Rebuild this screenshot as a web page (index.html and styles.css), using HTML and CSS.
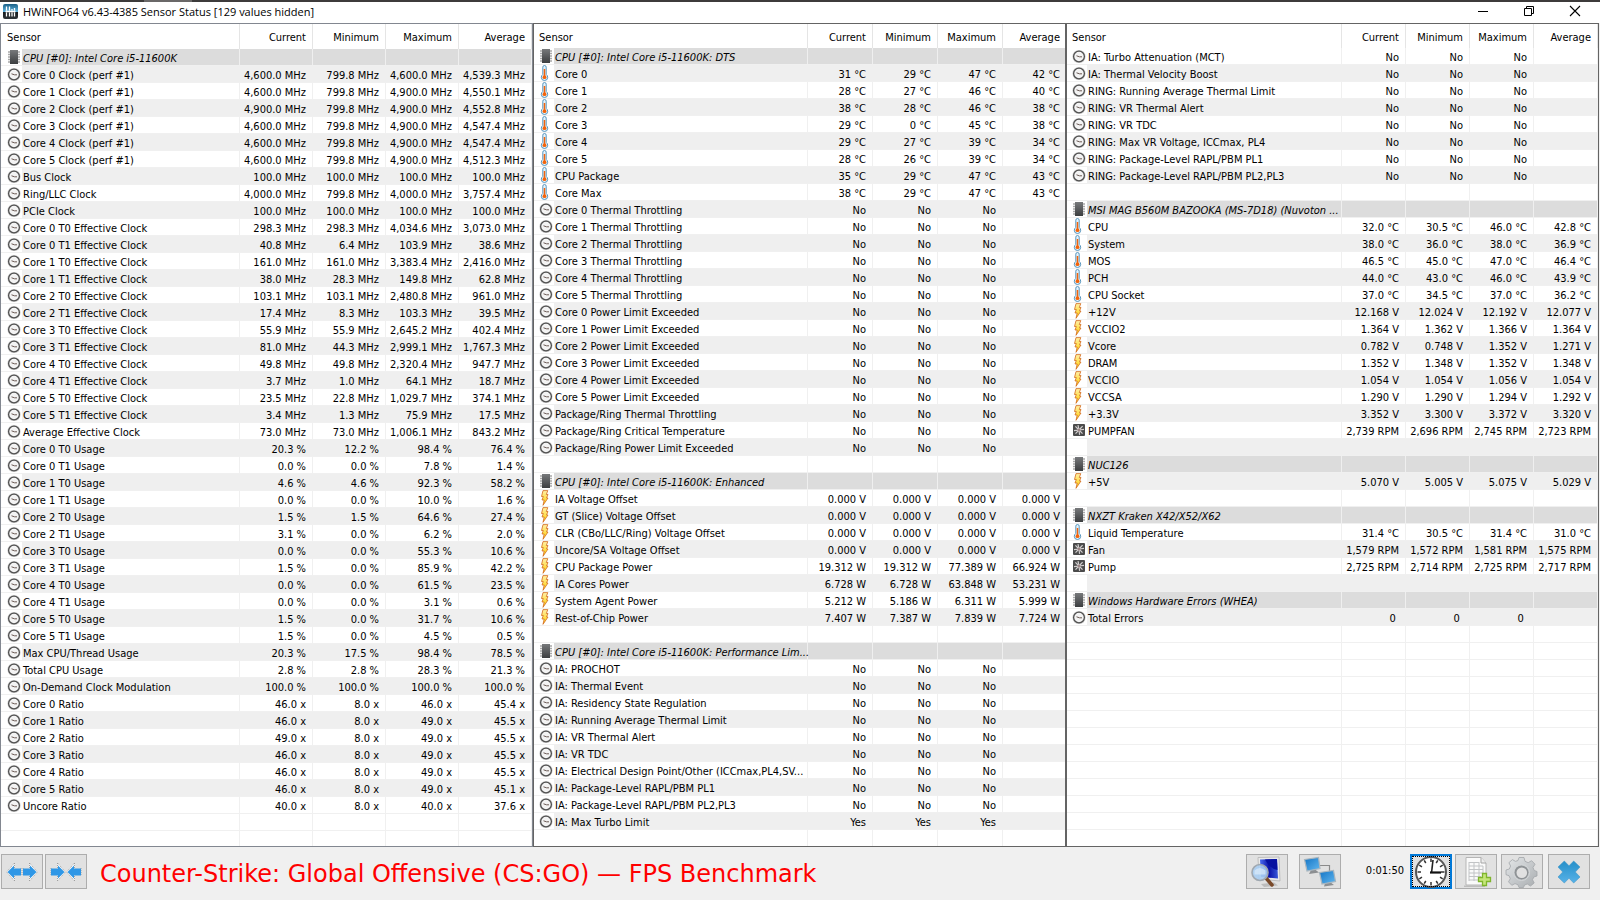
FILE: index.html
```html
<!DOCTYPE html>
<html lang="en">
<head>
<meta charset="utf-8">
<title>HWiNFO64 v6.43-4385 Sensor Status</title>
<link rel="stylesheet" href="styles.css">
</head>
<body>
<svg class="defs" aria-hidden="true">
  <defs>
    <linearGradient id="g-chip" x1="0" y1="0" x2="0" y2="1"><stop offset="0" stop-color="#77797b"/><stop offset="1" stop-color="#3c3e40"/></linearGradient>
    <linearGradient id="g-bolt" x1="0" y1="0" x2="0" y2="1"><stop offset="0" stop-color="#fff0a8"/><stop offset="1" stop-color="#ffd000"/></linearGradient>
    <linearGradient id="g-screen" x1="0" y1="0" x2="1" y2="1"><stop offset="0" stop-color="#1273c4"/><stop offset="1" stop-color="#63b8f0"/></linearGradient>
    <linearGradient id="g-navy" x1="0" y1="0" x2="1" y2="0"><stop offset="0" stop-color="#4a6cf0"/><stop offset=".5" stop-color="#0a12a8"/><stop offset="1" stop-color="#3858d8"/></linearGradient>
    <linearGradient id="g-cross" x1="0" y1="0" x2="0" y2="1"><stop offset="0" stop-color="#258fc9"/><stop offset="1" stop-color="#58b2e8"/></linearGradient>
    <linearGradient id="g-gear" x1="0" y1="0" x2="1" y2="1"><stop offset="0" stop-color="#e4e7e9"/><stop offset="1" stop-color="#a9adb0"/></linearGradient>
    <linearGradient id="g-app" x1="0" y1="0" x2="0" y2="1"><stop offset="0" stop-color="#1a5f86"/><stop offset=".5" stop-color="#5fb2dc"/><stop offset=".52" stop-color="#14181b"/><stop offset="1" stop-color="#30363a"/></linearGradient>
  </defs>
  <symbol id="i-clock" viewBox="0 0 14 16">
    <circle cx="7" cy="8.500" r="6.600" fill="#cfcfcf"/>
    <circle cx="7" cy="8.500" r="5.400" fill="#f3f3f3" stroke="#505050" stroke-width="1.300"/>
    <path d="M4.500 7.800 7.500 8.800 10 8.800" fill="none" stroke="#6b5a55" stroke-width="1"/>
  </symbol>
  <symbol id="i-chip" viewBox="0 0 14 16">
    <path d="M1 3h12M1 5.500h12M1 8h12M1 10.500h12M1 13h12" stroke="#a8a8a8" stroke-width="1.300"/>
    <rect x="3" y="1" width="8" height="14" fill="url(#g-chip)"/>
  </symbol>
  <symbol id="i-temp" viewBox="0 0 14 16">
    <path d="M3.800 9.500V2.200Q3.800.5 5.500.5T7.200 2.200V9.500Q8.700 10.500 8.700 12.300A3.200 3.200 0 0 1 2.300 12.300Q2.300 10.500 3.800 9.500Z" fill="#e4f3fc" stroke="#5795bd" stroke-width="1"/>
    <path d="M5.500 4V12" stroke="#f2640c" stroke-width="1.500"/>
    <circle cx="5.500" cy="12.200" r="1.900" fill="#f2640c"/>
  </symbol>
  <symbol id="i-bolt" viewBox="0 0 14 16">
    <path d="M4 .6H8.800L7.300 4.500H9L7.500 8H9L4 15.300 5.200 10H3L4.300 6.500H2.500Z" fill="url(#g-bolt)" stroke="#d2691e" stroke-width=".8"/>
  </symbol>
  <symbol id="i-fan" viewBox="0 0 14 16">
    <rect x="1" y="2" width="12" height="12" rx="1" fill="#4b4b4b"/>
    <path d="M7 8 6 3.200M7 8 10.600 4.200M7 8 12 7.400M7 8 10.500 11.600M7 8 7.600 12.900M7 8 3.500 11.700M7 8 2 8.600M7 8 3.400 4.300" stroke="#d2cfcf" stroke-width="1.200"/>
    <circle cx="7" cy="8" r="1.500" fill="#9c8585"/>
  </symbol>
  <symbol id="i-right" viewBox="0 0 15 20"><path d="M7 1 14.800 10 7 19M.5 6V14M7 1V6M7 14V19" fill="#fff" stroke="#8f8f8f" stroke-width=".8" stroke-dasharray="1 1"/><path d="M.5 6.500H7.500V3.500L14 10 7.500 16.500V13.500H.5Z" fill="#2f97e6"/></symbol>
  <symbol id="i-left" viewBox="0 0 15 20"><path d="M8 1 .2 10 8 19M14.500 6V14M8 1V6M8 14V19" fill="#fff" stroke="#8f8f8f" stroke-width=".8" stroke-dasharray="1 1"/><path d="M14.500 6.500H7.500V3.500L1 10 7.500 16.500V13.500H14.500Z" fill="#2f97e6"/></symbol>
</svg>

<div class="window">
  <div class="backdrop"></div>
  <header class="titlebar">
    <svg class="app-icon" viewBox="0 0 15 15"><rect width="15" height="15" rx="2" fill="url(#g-app)"/><path d="M3.500 2.500V6.500M6.500 2.500V6.500M9 5V6.500M11.500 4V6.500M3.500 8.500V12.500M6.500 8.500V12.500M9 8.500V12.500M11.500 8.500V12.500M2.500 7.500H12.500" stroke="#fff" stroke-width="1.300"/></svg>
    <h1 class="title">HWiNFO64 v6.43-4385 Sensor Status [129 values hidden]</h1>
    <button class="caption" aria-label="Minimize"><svg viewBox="0 0 12 12"><path d="M1 6.500H11" stroke="#000"/></svg></button>
    <button class="caption" aria-label="Restore"><svg viewBox="0 0 12 12"><path d="M1.500 3.500H8.500V10.500H1.500ZM3.500 3.500V1.500H10.500V8.500H8.500" fill="none" stroke="#000"/></svg></button>
    <button class="caption" aria-label="Close window"><svg viewBox="0 0 12 12"><path d="M1 1 11 11M11 1 1 11" stroke="#000" stroke-width="1.100"/></svg></button>
  </header>

  <main class="panels">
    <section class="panel clocks"></section>
    <section class="panel thermals"></section>
    <section class="panel board"></section>
  </main>

  <footer class="toolbar">
    <button class="tool" aria-label="Expand columns"><svg class="arrow"><use href="#i-left"/></svg><svg class="arrow"><use href="#i-right"/></svg></button>
    <button class="tool" aria-label="Shrink columns"><svg class="arrow"><use href="#i-right"/></svg><svg class="arrow"><use href="#i-left"/></svg></button>
    <p class="caption-text">Counter-Strike: Global Offensive (CS:GO) — FPS Benchmark</p>
    <div class="remote">
      <button class="tool" aria-label="System summary"><svg class="glyph" viewBox="0 0 34 32">
        <path d="M11 28 24 26.500 28 29.500 14 31Z" fill="#bcbcbc"/>
        <path d="M8 1.500 29 1 30 25 9 23Z" fill="#e9e9e9" stroke="#b4b4b4" stroke-width=".8"/>
        <path d="M10 3.500 27 3 28 22.500 11 21Z" fill="url(#g-navy)"/><path d="M15 3.400 27 3 27.500 14Q20 13 15 3.400Z" fill="#0610a0"/>
        <path d="M16 22 22 29" stroke="#7a4a2a" stroke-width="3.500" stroke-linecap="round"/>
        <circle cx="10" cy="16.500" r="8" fill="#a9cdf2" fill-opacity=".9" stroke="#a0a8b0" stroke-width="1.600"/><path d="M4.500 14.500Q9.500 9.500 15.500 14.500V18.500H4.500Z" fill="#dcebfa" opacity=".7"/></svg></button>
      <button class="tool" aria-label="Network"><svg class="glyph" viewBox="0 0 34 32">
        <path d="M16 9.500H26.500V16" fill="none" stroke="#8a8a8a" stroke-width="1.200"/>
        <path d="M8 14 12 13.500 16 16.500 6 18ZM22 27 27 26 31 29 21 30.500Z" fill="#8c8f92"/>
        <path d="M1.500 3.500 15.500 1.500 17 12.500 4 15Z" fill="url(#g-screen)" stroke="#a9b6bf" stroke-width="1.200"/>
        <path d="M16.500 16.500 30.500 14.500 32.500 25.500 19 28Z" fill="url(#g-screen)" stroke="#a9b6bf" stroke-width="1.200"/></svg></button>
    </div>
    <time class="elapsed">0:01:50</time>
    <button class="tool timer" aria-label="Reset timer"><svg class="glyph" viewBox="0 0 34 32">
      <circle cx="17" cy="16" r="15" fill="#fff" stroke="#555" stroke-width="2"/>
      <g stroke="#333" stroke-width="1.500"><path d="M17 2.500V6M17 26V29.500M3.500 16H7M27 16H30.500"/><path d="M10.200 4.300 11.800 7M22.200 25 23.800 27.700M5.300 22.800 8 21.200M26 10.800 28.700 9.200M5.300 9.200 8 10.800M26 21.200 28.700 22.800M10.200 27.700 11.800 25M22.200 7 23.800 4.300"/></g>
      <path d="M17.500 17 19 4" stroke="#222" stroke-width="1.600"/><path d="M16 16.500H27" stroke="#111" stroke-width="2.200"/></svg></button>
    <button class="tool log" aria-label="Start logging"><svg class="glyph" viewBox="0 0 34 32">
      <path d="M5 29.500H26V31H5Z" fill="#bdbdbd"/>
      <path d="M7 1.500H22L27 7V29H7Z" fill="#fafafa" stroke="#b5b5b5"/><path d="M22 1.500V7H27" fill="#eee" stroke="#a5a5a5"/>
      <path d="M10 6.500H20M10 10H24M10 13.500H24M10 17H24M10 20.500H22M10 24H19M10 6V25M15 6V25M20 6V21M24 10V17" fill="none" stroke="#c2c4c6" stroke-width="1"/>
      <path d="M23.500 17.500H27.500V21.500H31.500V25.500H27.500V29.500H23.500V25.500H19.500V21.500H23.500Z" fill="#c5e67a" stroke="#7fb52c" stroke-width="1.300"/></svg></button>
    <button class="tool settings" aria-label="Settings"><svg class="glyph" viewBox="0 0 34 32">
      <path d="M14 1.500H19L20 5.300 23.200 6.700 26.600 4.700 30 8.200 28 11.500 29.200 14.500 32 15.500V20L28.800 21 27.500 23.700 29.200 27 25.500 30 22.300 28 19.500 29 18.500 31.500H14L13 28.800 10 27.600 6.800 29.300 3.500 25.800 5.300 22.700 4 19.700 1 18.700V14L4.300 13 5.600 10 3.900 6.700 7.400 3.600 10.500 5.400 13 4.500Z" fill="url(#g-gear)" stroke="#a2a6a9" stroke-width=".8"/>
      <circle cx="16.500" cy="16.500" r="7" fill="#8f9396" /><circle cx="16.500" cy="16.500" r="8" fill="none" stroke="#d3d6d8"/><circle cx="16.800" cy="16.800" r="5.300" fill="#e1e1e1"/></svg></button>
    <button class="tool close" aria-label="Close"><svg class="glyph" viewBox="0 0 34 32">
      <path d="M12.300 5 17 9.800 21.700 5 28 11 23.300 16 28 21 21.700 27 17 22.200 12.300 27 6 21 10.700 16 6 11Z" fill="url(#g-cross)" stroke="#4699c8" stroke-width=".6"/></svg></button>
  </footer>
</div>
<script src="sensors.js"></script>
</body>
</html>
```

FILE: styles.css
```css
* { box-sizing: border-box; }
body {
  margin: 0;
  background: #f0f0f0;
  color: #000;
  font: 11px/13px "DejaVu Sans Condensed", "DejaVu Sans", sans-serif;
}
button { font: inherit; padding: 0; margin: 0; }
.defs { position: absolute; width: 0; height: 0; }

.window { display: flex; flex-direction: column; height: 100vh; }
.backdrop {
  flex: none;
  height: 2px;
  background: linear-gradient(to right, #3d3b3b 9%, #6a6868 9%, #6a6868 12%, #3d3b3b 12%);
}

.titlebar {
  flex: none;
  display: flex;
  align-items: stretch;
  height: 21px;
  padding: 0 2px 0 3px;
  background: #fff;
}
.app-icon { width: 15px; height: 15px; margin-top: 2px; }
.title {
  flex: 1;
  margin: 0 0 0 5px;
  font: 11px/20px "Open Sans", sans-serif;
}
.caption { width: 46px; border: 0; background: none; }
.caption svg { display: block; width: 12px; height: 12px; margin: 0 auto 4px; }

.panels {
  flex: 1;
  min-height: 0;
  display: grid;
  grid-template-columns: repeat(3, minmax(0, 1fr));
  padding-right: 1px;
}
.panel { overflow: hidden; background: #fff; border: 1px solid #646464; }
.clocks { border-color: #828790; --value: 73px; --last: 73px; --head: 25px; --mark: 21px; --inset: 6px; }
.thermals { --value: 65px; --last: 62px; --head: 24px; --mark: 20px; --inset: 5px; }
.board { --value: 64px; --last: 64px; --head: 24px; --mark: 20px; --inset: 5px; }

.sensors { width: 100%; table-layout: fixed; border-collapse: separate; border-spacing: 0; }
.col-value { width: var(--value); }
.col-last { width: var(--last); }
.sensors th {
  height: var(--head);
  padding: 2px 6px 0;
  font-weight: normal;
  text-align: right;
  border-right: 1px solid #e5e5e5;
}
.sensors th:first-child { padding-left: var(--inset); text-align: left; }
.sensors td {
  height: 17px;
  padding: 3px 6px 0 0;
  text-align: right;
  white-space: pre;
  border-right: 1px solid #f0f0f0;
  border-bottom: 1px solid #f0f0f0;
}
.thermals td:last-child, .thermals th:last-child { border-right: 0; padding-right: 5px; }
.sensors td.name { padding: 0; text-align: left; }
.stripe td { background: #efefef; border-right-color: #efefef; }
.group td { background: #dcdcdc; border-right-color: #efefef; }
.label { display: flex; height: 16px; }
.mark { flex: none; width: var(--mark); padding-left: var(--inset); background: #fff; }
.mark svg { display: block; width: 14px; height: 16px; }
.text { flex: 1; min-width: 0; padding: 3px 0 0 1px; white-space: nowrap; }
.group .text { font-style: italic; }

.toolbar {
  flex: none;
  display: flex;
  align-items: flex-start;
  padding: 7px 10px 8px 1px;
}
.tool {
  flex: none;
  display: flex;
  align-items: center;
  justify-content: center;
  width: 42px;
  height: 35px;
  background: #e1e1e1;
  border: 1px solid #adadad;
}
.tool + .tool { margin-left: 2px; }
.arrow { width: 16px; height: 20px; }
.glyph { width: 34px; height: 32px; }
.caption-text {
  flex: 1;
  margin: 0 0 0 13px;
  padding-top: 3px;
  color: #f00;
  font: 24px/35px "DejaVu Sans", sans-serif;
  white-space: nowrap;
}
.remote { display: flex; gap: 9px; }
.elapsed { width: 63px; padding: 10px 0 0; text-align: right; }
.timer { margin-left: 6px; border: 2px solid #0078d7; outline: 1px dotted #000; outline-offset: -3px; }
.tool.log { margin-left: 3px; }
.tool.settings { margin-left: 4px; }
.tool.close { margin-left: 5px; }
```

FILE: sensors.js
```javascript
// Each line: icon|name|current|minimum|maximum|average|unit. An empty line is a spacer row.
const clocks = `chip|CPU [#0]: Intel Core i5-11600K
clock|Core 0 Clock (perf #1)|4,600.0|799.8|4,600.0|4,539.3| MHz
clock|Core 1 Clock (perf #1)|4,600.0|799.8|4,900.0|4,550.1| MHz
clock|Core 2 Clock (perf #1)|4,900.0|799.8|4,900.0|4,552.8| MHz
clock|Core 3 Clock (perf #1)|4,600.0|799.8|4,900.0|4,547.4| MHz
clock|Core 4 Clock (perf #1)|4,600.0|799.8|4,900.0|4,547.4| MHz
clock|Core 5 Clock (perf #1)|4,600.0|799.8|4,900.0|4,512.3| MHz
clock|Bus Clock|100.0|100.0|100.0|100.0| MHz
clock|Ring/LLC Clock|4,000.0|799.8|4,000.0|3,757.4| MHz
clock|PCIe Clock|100.0|100.0|100.0|100.0| MHz
clock|Core 0 T0 Effective Clock|298.3|298.3|4,034.6|3,073.0| MHz
clock|Core 0 T1 Effective Clock|40.8|6.4|103.9|38.6| MHz
clock|Core 1 T0 Effective Clock|161.0|161.0|3,383.4|2,416.0| MHz
clock|Core 1 T1 Effective Clock|38.0|28.3|149.8|62.8| MHz
clock|Core 2 T0 Effective Clock|103.1|103.1|2,480.8|961.0| MHz
clock|Core 2 T1 Effective Clock|17.4|8.3|103.3|39.5| MHz
clock|Core 3 T0 Effective Clock|55.9|55.9|2,645.2|402.4| MHz
clock|Core 3 T1 Effective Clock|81.0|44.3|2,999.1|1,767.3| MHz
clock|Core 4 T0 Effective Clock|49.8|49.8|2,320.4|947.7| MHz
clock|Core 4 T1 Effective Clock|3.7|1.0|64.1|18.7| MHz
clock|Core 5 T0 Effective Clock|23.5|22.8|1,029.7|374.1| MHz
clock|Core 5 T1 Effective Clock|3.4|1.3|75.9|17.5| MHz
clock|Average Effective Clock|73.0|73.0|1,006.1|843.2| MHz
clock|Core 0 T0 Usage|20.3|12.2|98.4|76.4| %
clock|Core 0 T1 Usage|0.0|0.0|7.8|1.4| %
clock|Core 1 T0 Usage|4.6|4.6|92.3|58.2| %
clock|Core 1 T1 Usage|0.0|0.0|10.0|1.6| %
clock|Core 2 T0 Usage|1.5|1.5|64.6|27.4| %
clock|Core 2 T1 Usage|3.1|0.0|6.2|2.0| %
clock|Core 3 T0 Usage|0.0|0.0|55.3|10.6| %
clock|Core 3 T1 Usage|1.5|0.0|85.9|42.2| %
clock|Core 4 T0 Usage|0.0|0.0|61.5|23.5| %
clock|Core 4 T1 Usage|0.0|0.0|3.1|0.6| %
clock|Core 5 T0 Usage|1.5|0.0|31.7|10.6| %
clock|Core 5 T1 Usage|1.5|0.0|4.5|0.5| %
clock|Max CPU/Thread Usage|20.3|17.5|98.4|78.5| %
clock|Total CPU Usage|2.8|2.8|28.3|21.3| %
clock|On-Demand Clock Modulation|100.0|100.0|100.0|100.0| %
clock|Core 0 Ratio|46.0|8.0|46.0|45.4| x
clock|Core 1 Ratio|46.0|8.0|49.0|45.5| x
clock|Core 2 Ratio|49.0|8.0|49.0|45.5| x
clock|Core 3 Ratio|46.0|8.0|49.0|45.5| x
clock|Core 4 Ratio|46.0|8.0|49.0|45.5| x
clock|Core 5 Ratio|46.0|8.0|49.0|45.1| x
clock|Uncore Ratio|40.0|8.0|40.0|37.6| x`;

const thermals = `chip|CPU [#0]: Intel Core i5-11600K: DTS
temp|Core 0|31|29|47|42| °C
temp|Core 1|28|27|46|40| °C
temp|Core 2|38|28|46|38| °C
temp|Core 3|29|0|45|38| °C
temp|Core 4|29|27|39|34| °C
temp|Core 5|28|26|39|34| °C
temp|CPU Package|35|29|47|43| °C
temp|Core Max|38|29|47|43| °C
clock|Core 0 Thermal Throttling|No|No|No
clock|Core 1 Thermal Throttling|No|No|No
clock|Core 2 Thermal Throttling|No|No|No
clock|Core 3 Thermal Throttling|No|No|No
clock|Core 4 Thermal Throttling|No|No|No
clock|Core 5 Thermal Throttling|No|No|No
clock|Core 0 Power Limit Exceeded|No|No|No
clock|Core 1 Power Limit Exceeded|No|No|No
clock|Core 2 Power Limit Exceeded|No|No|No
clock|Core 3 Power Limit Exceeded|No|No|No
clock|Core 4 Power Limit Exceeded|No|No|No
clock|Core 5 Power Limit Exceeded|No|No|No
clock|Package/Ring Thermal Throttling|No|No|No
clock|Package/Ring Critical Temperature|No|No|No
clock|Package/Ring Power Limit Exceeded|No|No|No

chip|CPU [#0]: Intel Core i5-11600K: Enhanced
bolt|IA Voltage Offset|0.000|0.000|0.000|0.000| V
bolt|GT (Slice) Voltage Offset|0.000|0.000|0.000|0.000| V
bolt|CLR (CBo/LLC/Ring) Voltage Offset|0.000|0.000|0.000|0.000| V
bolt|Uncore/SA Voltage Offset|0.000|0.000|0.000|0.000| V
bolt|CPU Package Power|19.312|19.312|77.389|66.924| W
bolt|IA Cores Power|6.728|6.728|63.848|53.231| W
bolt|System Agent Power|5.212|5.186|6.311|5.999| W
bolt|Rest-of-Chip Power|7.407|7.387|7.839|7.724| W

chip|CPU [#0]: Intel Core i5-11600K: Performance Lim...
clock|IA: PROCHOT|No|No|No
clock|IA: Thermal Event|No|No|No
clock|IA: Residency State Regulation|No|No|No
clock|IA: Running Average Thermal Limit|No|No|No
clock|IA: VR Thermal Alert|No|No|No
clock|IA: VR TDC|No|No|No
clock|IA: Electrical Design Point/Other (ICCmax,PL4,SV...|No|No|No
clock|IA: Package-Level RAPL/PBM PL1|No|No|No
clock|IA: Package-Level RAPL/PBM PL2,PL3|No|No|No
clock|IA: Max Turbo Limit|Yes|Yes|Yes`;

const board = `clock|IA: Turbo Attenuation (MCT)|No|No|No
clock|IA: Thermal Velocity Boost|No|No|No
clock|RING: Running Average Thermal Limit|No|No|No
clock|RING: VR Thermal Alert|No|No|No
clock|RING: VR TDC|No|No|No
clock|RING: Max VR Voltage, ICCmax, PL4|No|No|No
clock|RING: Package-Level RAPL/PBM PL1|No|No|No
clock|RING: Package-Level RAPL/PBM PL2,PL3|No|No|No

chip|MSI MAG B560M BAZOOKA (MS-7D18) (Nuvoton ...
temp|CPU|32.0|30.5|46.0|42.8| °C
temp|System|38.0|36.0|38.0|36.9| °C
temp|MOS|46.5|45.0|47.0|46.4| °C
temp|PCH|44.0|43.0|46.0|43.9| °C
temp|CPU Socket|37.0|34.5|37.0|36.2| °C
bolt|+12V|12.168|12.024|12.192|12.077| V
bolt|VCCIO2|1.364|1.362|1.366|1.364| V
bolt|Vcore|0.782|0.748|1.352|1.271| V
bolt|DRAM|1.352|1.348|1.352|1.348| V
bolt|VCCIO|1.054|1.054|1.056|1.054| V
bolt|VCCSA|1.290|1.290|1.294|1.292| V
bolt|+3.3V|3.352|3.300|3.372|3.320| V
fan|PUMPFAN|2,739|2,696|2,745|2,723| RPM

chip|NUC126
bolt|+5V|5.070|5.005|5.075|5.029| V

chip|NXZT Kraken X42/X52/X62
temp|Liquid Temperature|31.4|30.5|31.4|31.0| °C
fan|Fan|1,579|1,572|1,581|1,575| RPM
fan|Pump|2,725|2,714|2,725|2,717| RPM

chip|Windows Hardware Errors (WHEA)
clock|Total Errors|0|0|0|| `;

const VISIBLE_ROWS = 47;

function rowHtml(line, index, filled) {
  const [icon, name = '', ...rest] = line.split('|');
  const unit = rest[4] || '';
  const kind = icon === 'chip' ? 'group' : filled && index % 2 ? 'stripe' : '';
  const mark = icon ? `<svg aria-hidden="true"><use href="#i-${icon}"/></svg>` : '';
  const label = filled ? `<div class="label"><span class="mark">${mark}</span><span class="text">${name}</span></div>` : '';
  const values = [0, 1, 2, 3].map(i => `<td>${rest[i] ? rest[i] + unit : ''}</td>`).join('');
  return `<tr class="${kind}"><td class="name">${label}</td>${values}</tr>`;
}

function fill(selector, data) {
  const lines = data.split('\n');
  const rows = lines.map((line, i) => rowHtml(line, i, true));
  while (rows.length < VISIBLE_ROWS) rows.push(rowHtml('', rows.length, false));
  document.querySelector(selector).innerHTML = `<table class="sensors">
    <colgroup><col><col class="col-value"><col class="col-value"><col class="col-value"><col class="col-last"></colgroup>
    <thead><tr><th>Sensor</th><th>Current</th><th>Minimum</th><th>Maximum</th><th>Average</th></tr></thead>
    <tbody>${rows.join('')}</tbody></table>`;
}

fill('.clocks', clocks);
fill('.thermals', thermals);
fill('.board', board);
```
